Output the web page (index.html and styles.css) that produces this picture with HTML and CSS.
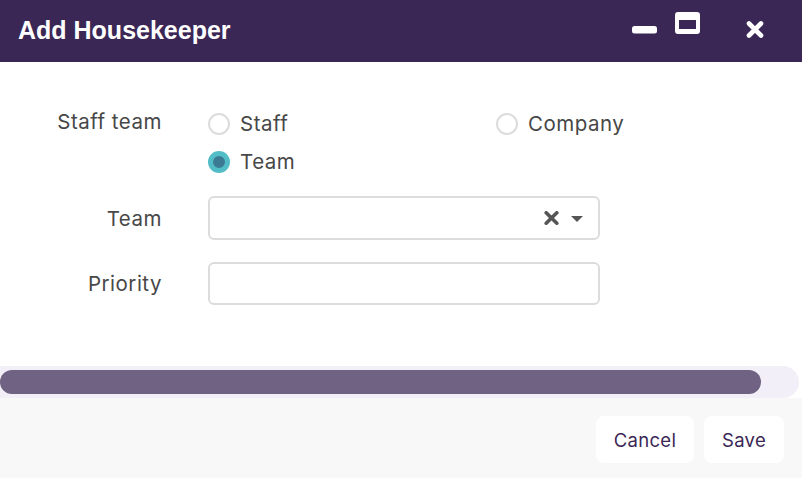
FILE: index.html
```html
<!DOCTYPE html>
<html>
<head>
<meta charset="utf-8">
<link rel="stylesheet" href="styles.css">
</head>
<body>
<div class="dialog">
  <header class="titlebar">
    <h1 class="title">Add Housekeeper</h1>
    <div class="controls">
      <svg class="ic-min" width="26" height="8" viewBox="0 0 26 8"><rect x="0" y="0" width="25" height="7.5" rx="2.5" fill="#fff"/></svg>
      <svg class="ic-max" width="26" height="22" viewBox="0 0 26 22"><path fill="#fff" fill-rule="evenodd" d="M3 0 H22 A3 3 0 0 1 25 3 V19 A3 3 0 0 1 22 22 H3 A3 3 0 0 1 0 19 V3 A3 3 0 0 1 3 0 Z M4 8 V17 H21 V8 Z"/></svg>
      <svg class="ic-close" width="18" height="17" viewBox="0 0 18 17"><path d="M3 2.5 L15 14.5 M15 2.5 L3 14.5" stroke="#fff" stroke-width="4.6" stroke-linecap="round"/></svg>
    </div>
  </header>
  <main class="body">
    <div class="form">
      <div class="label label-top">Staff team</div>
      <div class="radios">
        <label class="radio"><span class="dot"></span><span>Staff</span></label>
        <label class="radio"><span class="dot"></span><span>Company</span></label>
        <label class="radio"><span class="dot checked"></span><span>Team</span></label>
      </div>
      <div class="label">Team</div>
      <div class="field select">
        <svg class="sel-x" width="15" height="14" viewBox="0 0 15 14"><path d="M2.2 1.8 L12.8 12.2 M12.8 1.8 L2.2 12.2" stroke="#555" stroke-width="3.6" stroke-linecap="round"/></svg>
        <svg class="sel-caret" width="12" height="6" viewBox="0 0 12 6"><path d="M0 0 L12 0 L6 6 Z" fill="#555"/></svg>
      </div>
      <div class="label">Priority</div>
      <div class="field"></div>
    </div>
  </main>
  <div class="scroll"><div class="thumb"></div></div>
  <footer class="footer">
    <button class="btn">Cancel</button>
    <button class="btn">Save</button>
  </footer>
</div>
</body>
</html>
```
FILE: styles.css
```css
* { box-sizing: border-box; }
html, body { margin: 0; padding: 0; }
body {
  width: 802px;
  height: 478px;
  overflow: hidden;
  font-family: Inter, "Noto Sans", sans-serif;
  background: #fff;
}
.dialog { display: flex; flex-direction: column; height: 478px; }
.titlebar {
  height: 62px;
  background: #3b2755;
  display: flex;
  align-items: center;
  justify-content: space-between;
  padding: 0 38px 0 18px;
}
.title {
  margin: 0;
  color: #fff;
  font-family: "Liberation Sans", Arial, sans-serif;
  font-size: 25px;
  font-weight: 700;
  position: relative;
  top: -1px;
}
.controls { display: flex; align-items: flex-start; height: 26px; margin-top: -10px; }
.ic-min { margin-top: 13px; margin-left: 1px; }
.ic-max { margin-left: 17px; margin-top: -1px; }
.ic-close { margin-left: 45px; margin-top: 8px; }
.body { flex: 1; padding-top: 48px; }
.form {
  display: grid;
  grid-template-columns: 162px 392px;
  column-gap: 46px;
  row-gap: 22px;
  align-items: center;
}
.label {
  text-align: right;
  font-size: 20.5px;
  letter-spacing: 0.5px;
  color: #474747;
}
.label-top { align-self: start; margin-top: -1px; }
.radios {
  display: grid;
  grid-template-columns: 288px 200px;
  row-gap: 11px;
  margin-bottom: -1px;
}
.radio {
  display: flex;
  align-items: center;
  font-size: 20.5px;
  letter-spacing: 0.5px;
  color: #474747;
  height: 27px;
}
.dot {
  width: 22px;
  height: 22px;
  border-radius: 50%;
  border: 2px solid #dcdcdc;
  margin-right: 10px;
  flex: none;
}
.dot.checked {
  background: #3c7a94;
  border: 5px solid #52bdc7;
}
.field {
  height: 44px;
  border: 2px solid #dcdcdc;
  border-radius: 6px;
  display: flex;
  align-items: center;
  justify-content: flex-end;
  padding-right: 15px;
}
.field:last-child { height: 43px; }
.sel-x { margin-right: 12px; }
.sel-caret { margin-top: 1px; }
.scroll {
  height: 32px;
  background: #f2eff8;
  border-radius: 0 16px 16px 0;
  margin-right: 3px;
  padding: 4px 0;
}
.thumb {
  width: 761px;
  height: 24px;
  background: #6f6283;
  border-radius: 12px;
}
.footer {
  height: 80px;
  background: #f8f8f8;
  display: flex;
  justify-content: flex-end;
  align-items: flex-start;
  gap: 10px;
  padding: 18px 18px 0 0;
}
.btn {
  border: none;
  background: #fff;
  border-radius: 8px;
  height: 47px;
  font-family: Inter, "Noto Sans", sans-serif;
  font-size: 18.5px;
  letter-spacing: 0.3px;
  color: #3b2755;
  padding: 0;
}
.btn:first-child { width: 98px; }
.btn:last-child { width: 80px; }
```
